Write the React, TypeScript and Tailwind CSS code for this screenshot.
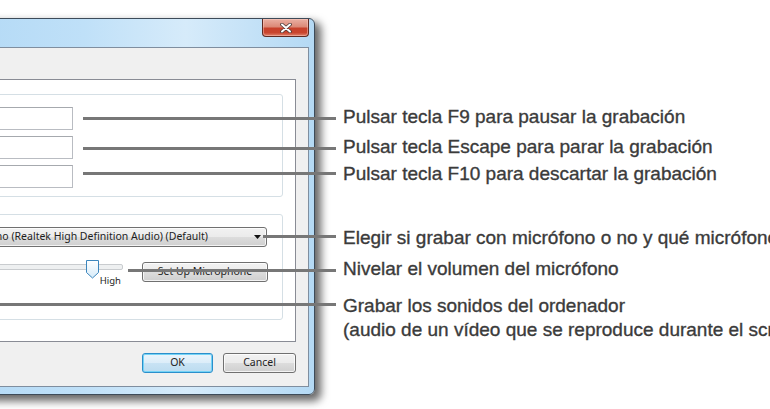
import React from "react";

const winBtn =
  "flex items-center justify-center rounded-[3px] border border-[#707070] bg-[linear-gradient(to_bottom,#f2f2f2_0%,#ebebeb_50%,#dddddd_50%,#cfcfcf_100%)] shadow-[inset_0_0_0_1px_rgba(255,255,255,0.75)] text-[10.5px] text-[#1e1e1e]";

function CloseButton() {
  return (
    <div className="flex h-[18px] w-[47px] items-center justify-center rounded-b-[4px] border border-t-0 border-[#5e2a22] bg-[linear-gradient(to_bottom,#eab0a3_0%,#dc8a78_45%,#c7412b_55%,#c9452e_80%,#e0826c_100%)] shadow-[inset_0_0_0_1px_rgba(255,210,200,0.45)]">
      <svg width="12" height="10" viewBox="0 0 12 10">
        <path d="M2 1.5 L10 8.5 M10 1.5 L2 8.5" stroke="#4a3a38" strokeWidth="3.6" strokeLinecap="round" />
        <path d="M2 1.5 L10 8.5 M10 1.5 L2 8.5" stroke="#ffffff" strokeWidth="2" strokeLinecap="round" />
      </svg>
    </div>
  );
}

function TextBox() {
  return <div className="h-[23px] w-[150px] border border-[#b9bcc2] border-t-[#a6a9ae] bg-white" />;
}

function SliderThumb() {
  return (
    <svg width="13" height="19" viewBox="0 0 13 19" className="absolute right-[24px] top-[-2px]">
      <defs>
        <linearGradient id="thumb" x1="0" y1="0" x2="0" y2="1">
          <stop offset="0" stopColor="#ffffff" />
          <stop offset="1" stopColor="#d6ebf9" />
        </linearGradient>
      </defs>
      <path d="M0.5 0.5 H12.5 V12.5 L6.5 18 L0.5 12.5 Z" fill="url(#thumb)" stroke="#3c86bd" strokeWidth="1" />
    </svg>
  );
}

function Dialog() {
  return (
    <div className="-ml-[200px] w-[515px] rounded-r-[6px] border border-[#3d4b59] bg-[linear-gradient(to_right,#a3d0f2_0%,#bfe0f8_55%,#d6ebfa_75%,#b4d9f4_100%)] px-[5px] pb-[7px] shadow-[5px_5px_9px_1px_rgba(0,0,0,0.6)]">
      <div className="flex h-[28px] items-start justify-end">
        <CloseButton />
      </div>
      <div className="flex flex-col border border-[#7f8e9f] bg-[#f0f0f0] pb-[13px] pr-[12px] pt-[31px]">
        <div className="flex flex-col gap-[17px] border border-[#898c95] bg-white pb-[21px] pr-[12px] pt-[14px]">
          <div className="flex flex-col items-end gap-[6px] rounded-[3px] border border-[#d5dfe5] pb-[8px] pr-[209px] pt-[12px]">
            <TextBox />
            <TextBox />
            <TextBox />
          </div>
          <div className="flex flex-col rounded-[3px] border border-[#d5dfe5] pb-[37px] pt-[12px]">
            <div className="flex justify-end pr-[15px]">
              <div className={winBtn + " h-[20px] w-[420px] justify-end pr-[5px]"}>
                <span className="whitespace-nowrap">Micrófono (Realtek High Definition Audio) (Default)</span>
                <span className="w-[46px]" />
                <svg width="7" height="4" viewBox="0 0 7 4">
                  <path d="M0 0 H7 L3.5 4 Z" fill="#111" />
                </svg>
              </div>
            </div>
            <div className="mt-[15px] flex h-[20px] items-start justify-end gap-[19px] pr-[14px]">
              <div className="relative flex w-[200px] flex-col">
                <div className="mt-[2px] h-[6px] rounded-r-[2px] border border-[#c9cccf] bg-[#eef0f1]" />
                <SliderThumb />
                <div className="mt-[6px] flex justify-end pr-[2px] text-[9.5px] leading-[10px] text-[#1e1e1e]">High</div>
              </div>
              <div className={winBtn + " h-[20px] w-[126px]"}>Set Up Microphone</div>
            </div>
          </div>
        </div>
        <div className="mt-[11px] flex justify-end gap-[10px]">
          <div className="flex h-[20px] w-[71px] items-center justify-center rounded-[3px] border border-[#2b8fcb] bg-[linear-gradient(to_bottom,#eaf5fc_0%,#dcedf9_50%,#c9e3f4_50%,#bcdcf0_100%)] shadow-[inset_0_0_0_1px_#74d3f6] text-[10.5px] text-[#1e1e1e]">
            OK
          </div>
          <div className={winBtn + " h-[20px] w-[73px]"}>Cancel</div>
        </div>
      </div>
    </div>
  );
}

const label =
  "absolute left-[343px] whitespace-nowrap text-[19px] leading-[19px] text-[#3b3b3b] [-webkit-text-stroke:0.35px_#3b3b3b]";
const line = "absolute h-[3px] bg-[#777777]";

export default function App() {
  return (
    <div className="relative h-[409px] w-[770px] overflow-hidden bg-white font-['Noto_Sans',sans-serif]">
      <div className="pt-[18px]">
        <Dialog />
      </div>

      {/* callouts */}
      <div className="font-['Liberation_Sans',Arial,sans-serif]">
        <div className={line + " left-[83px] top-[117px] w-[253px]"} />
        <div className={line + " left-[83px] top-[147px] w-[253px]"} />
        <div className={line + " left-[83px] top-[172px] w-[253px]"} />
        <div className={line + " left-[263px] top-[235px] w-[73px]"} />
        <div className={line + " left-[128px] top-[269px] w-[208px]"} />
        <div className={line + " left-0 top-[303px] w-[336px]"} />

        <div className={label + " top-[107px]"}>Pulsar tecla F9 para pausar la grabación</div>
        <div className={label + " top-[137px]"}>Pulsar tecla Escape para parar la grabación</div>
        <div className={label + " top-[164px]"}>Pulsar tecla F10 para descartar la grabación</div>
        <div className={label + " top-[228px]"}>Elegir si grabar con micrófono o no y qué micrófono</div>
        <div className={label + " top-[259px]"}>Nivelar el volumen del micrófono</div>
        <div className={label + " top-[294px] leading-[24px]"}>
          Grabar los sonidos del ordenador
          <br />
          (audio de un vídeo que se reproduce durante el screencast)
        </div>
      </div>
    </div>
  );
}
